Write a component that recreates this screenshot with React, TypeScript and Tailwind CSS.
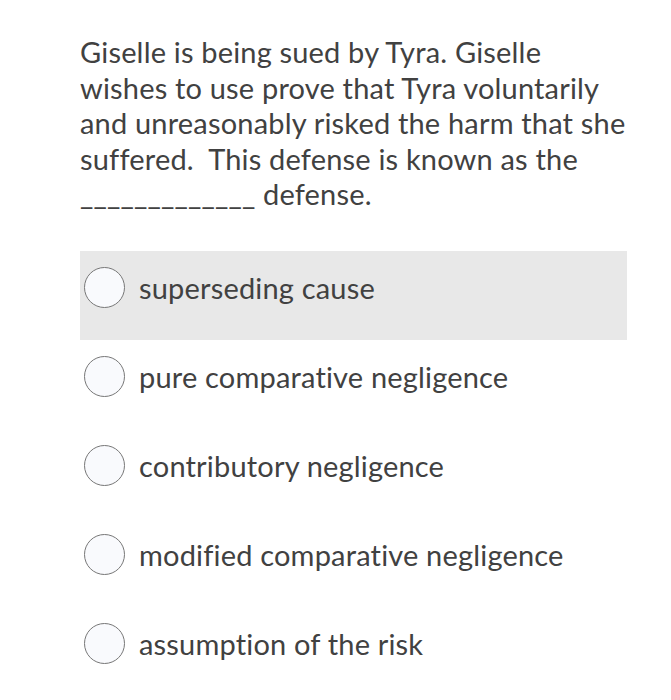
import React from "react";

const options = [
  "superseding cause",
  "pure comparative negligence",
  "contributory negligence",
  "modified comparative negligence",
  "assumption of the risk",
];

export default function App() {
  return (
    <div
      className="w-[671px] h-[700px] bg-white text-[#414141] pt-[34px] pl-[80px] tracking-[0.18px]"
      style={{ fontFamily: "Lato, 'Open Sans', sans-serif" }}
    >
      <div className="w-[560px] text-[29px] leading-[35.5px] whitespace-nowrap">
        Giselle is being sued by Tyra. Giselle
        <br />
        wishes to use prove that Tyra voluntarily
        <br />
        and unreasonably risked the harm that she
        <br />
        suffered.&nbsp; This defense is known as the
        <br />
        _____________ defense.
      </div>
      <div className="mt-[39px] w-[547px] flex flex-col">
        {options.map((o, i) => (
          <div
            key={o}
            className={`h-[89px] flex items-start pt-[16px] pl-[4px] ${i === 0 ? "bg-[#e8e8e8]" : ""}`}
          >
            <div className="flex items-center h-[41px]">
              <span className="w-[41px] h-[41px] rounded-full border-[1.5px] border-[#777] bg-[#f9fafd] shrink-0" />
              <span className="ml-[14px] text-[29px] leading-none">{o}</span>
            </div>
          </div>
        ))}
      </div>
    </div>
  );
}
